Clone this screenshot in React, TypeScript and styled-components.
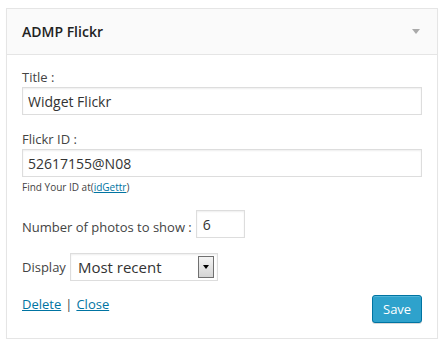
import React, { useState } from "react";
import styled, { createGlobalStyle } from "styled-components";

const GlobalStyle = createGlobalStyle`
  html, body {
    margin: 0;
    padding: 0;
    background: #fff;
  }
  body {
    font-family: "Open Sans", "Noto Sans", sans-serif;
    color: #444;
  }
`;

const App: React.FC = () => {
  // form state
  const [title, setTitle] = useState<string>("Widget Flickr");
  const [flickrId, setFlickrId] = useState<string>("52617155@N08");
  const [count, setCount] = useState<string>("6");
  const [display, setDisplay] = useState<string>("latest");

  return (
    <>
      <GlobalStyle />
      <Page>
        <Widget>
          {/* widget header */}
          <WidgetTop>
            <WidgetTitle>ADMP Flickr</WidgetTitle>
            <ToggleArrow />
          </WidgetTop>

          <WidgetInside>
            <Field $top={13}>
              <Label htmlFor="title">Title :</Label>
              <TextInput
                id="title"
                value={title}
                onChange={(e) => setTitle(e.target.value)}
              />
            </Field>

            <Field $top={15}>
              <Label htmlFor="flickr-id">Flickr ID :</Label>
              <TextInput
                id="flickr-id"
                value={flickrId}
                onChange={(e) => setFlickrId(e.target.value)}
              />
              <Hint>
                Find Your ID at(<HintLink href="#">idGettr</HintLink>)
              </Hint>
            </Field>

            <InlineRow $top={16}>
              <InlineLabel $shift={6} htmlFor="count">
                Number of photos to show :
              </InlineLabel>
              <NumberInput
                id="count"
                value={count}
                onChange={(e) => setCount(e.target.value)}
              />
            </InlineRow>

            <InlineRow $top={15}>
              <InlineLabel $shift={0} htmlFor="display">
                Display
              </InlineLabel>
              <SelectWrap>
                <Select
                  id="display"
                  value={display}
                  onChange={(e) => setDisplay(e.target.value)}
                >
                  <option value="latest">Most recent</option>
                  <option value="random">Random</option>
                </Select>
                <DropButton />
              </SelectWrap>
            </InlineRow>

            <Actions>
              <Links>
                <ActionLink href="#">Delete</ActionLink>
                <Sep>|</Sep>
                <ActionLink href="#">Close</ActionLink>
              </Links>
              <SaveButton type="button">Save</SaveButton>
            </Actions>
          </WidgetInside>
        </Widget>
      </Page>
    </>
  );
};

export default App;

const Page = styled.div`
  padding: 8px 5px 0 6px;
`;

const Widget = styled.div`
  width: 432px;
  box-sizing: border-box;
  background: #fff;
  border: 1px solid #e5e5e5;
  box-shadow: 0 1px 1px rgba(0, 0, 0, 0.04);
`;

const WidgetTop = styled.div`
  height: 46px;
  box-sizing: border-box;
  display: flex;
  align-items: center;
  justify-content: space-between;
  padding: 0 17px 0 15px;
  background: #fafafa;
  border-bottom: 1px solid #e5e5e5;
`;

const WidgetTitle = styled.h4`
  margin: 0;
  font-size: 14px;
  font-weight: 600;
  line-height: 18px;
  color: #222;
`;

const ToggleArrow = styled.span`
  width: 0;
  height: 0;
  border-left: 4px solid transparent;
  border-right: 4px solid transparent;
  border-top: 5px solid #aaa;
`;

const WidgetInside = styled.div`
  padding: 0 15px 15px;
  display: flex;
  flex-direction: column;
`;

const Field = styled.div<{ $top: number }>`
  display: flex;
  flex-direction: column;
  margin-top: ${(p) => p.$top}px;
`;

const Label = styled.label`
  font-size: 13px;
  line-height: 18px;
  color: #444;
  margin-bottom: 1px;
`;

const inputBase = `
  box-sizing: border-box;
  height: 28px;
  border: 1px solid #ddd;
  box-shadow: inset 0 1px 2px rgba(0, 0, 0, 0.07);
  background: #fff;
  color: #333;
  font-family: "Open Sans", "Noto Sans", sans-serif;
  font-size: 14px;
  outline: none;
  margin: 0;
`;

const TextInput = styled.input`
  ${inputBase}
  width: 100%;
  padding: 0 5px;
`;

const Hint = styled.small`
  margin-top: 4px;
  font-size: 10px;
  line-height: 13px;
  color: #444;
`;

const HintLink = styled.a`
  color: #0074a2;
  text-decoration: underline;
`;

const InlineRow = styled.div<{ $top: number }>`
  display: flex;
  align-items: center;
  gap: 4px;
  margin-top: ${(p) => p.$top}px;
`;

const InlineLabel = styled.label<{ $shift: number }>`
  font-size: 13px;
  line-height: 18px;
  color: #444;
  margin-top: ${(p) => p.$shift}px;
`;

const NumberInput = styled.input`
  ${inputBase}
  width: 49px;
  padding: 0 6px;
`;

const SelectWrap = styled.div`
  position: relative;
  width: 148px;
  height: 28px;
`;

const Select = styled.select`
  ${inputBase}
  width: 100%;
  padding: 0 24px 0 7px;
  font-size: 15px;
  appearance: none;
  -webkit-appearance: none;
  border-radius: 0;
`;

const DropButton = styled.span`
  position: absolute;
  top: 3px;
  right: 4px;
  width: 16px;
  height: 22px;
  box-sizing: border-box;
  border: 1px solid #707070;
  background: linear-gradient(#f4f4f4, #d4d4d4);
  pointer-events: none;
  display: flex;
  align-items: center;
  justify-content: center;

  &::after {
    content: "";
    width: 0;
    height: 0;
    border-left: 3.5px solid transparent;
    border-right: 3.5px solid transparent;
    border-top: 4px solid #000;
  }
`;

const Actions = styled.div`
  display: flex;
  justify-content: space-between;
  align-items: flex-start;
  margin-top: 14px;
`;

const Links = styled.div`
  font-size: 13px;
  line-height: 18px;
  color: #444;
`;

const ActionLink = styled.a`
  color: #0074a2;
  text-decoration: underline;
`;

const Sep = styled.span`
  margin: 0 4px;
`;

const SaveButton = styled.button`
  box-sizing: border-box;
  width: 50px;
  height: 28px;
  padding: 0 10px 2px;
  border: 1px solid #0074a2;
  border-radius: 3px;
  background: #2ea2cc;
  box-shadow: inset 0 1px 0 rgba(120, 200, 230, 0.5), 0 1px 0 rgba(0, 0, 0, 0.15);
  color: #fff;
  font-family: "Open Sans", "Noto Sans", sans-serif;
  font-size: 13px;
  line-height: 26px;
  cursor: pointer;
`;
